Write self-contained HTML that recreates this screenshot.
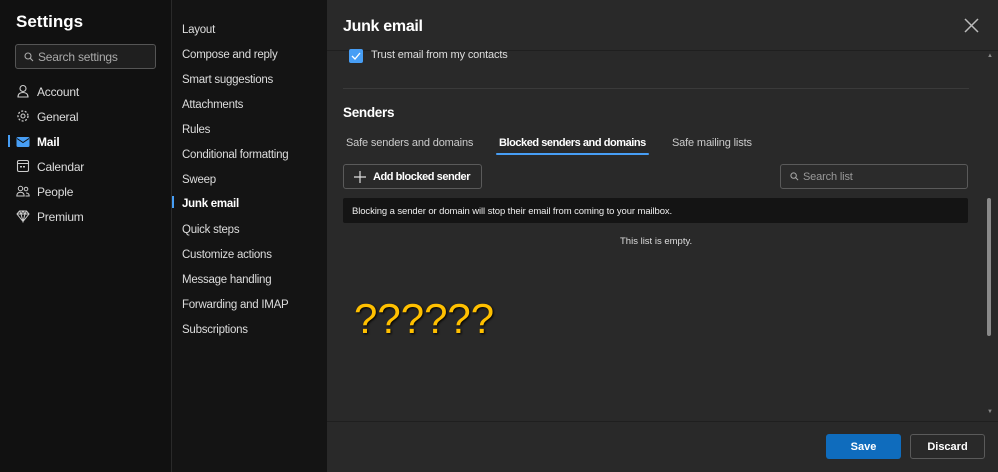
<!DOCTYPE html>
<html><head><meta charset="utf-8"><style>
*{box-sizing:border-box;margin:0;padding:0}
body{width:998px;height:472px;overflow:hidden;background:#111;font-family:"Segoe UI","Liberation Sans",sans-serif;color:#ddd;position:relative;font-size:12px}
.l{position:absolute;left:0;top:0;width:171px;height:472px;background:#111}
.m{position:absolute;left:171px;top:0;width:156px;height:472px;background:#141414;border-left:1px solid #2a2a2a}
.r{position:absolute;left:327px;top:0;width:671px;height:472px;background:#292929}
.t{position:absolute;white-space:nowrap}
h1{position:absolute;left:16px;top:12px;font-size:17px;font-weight:bold;color:#fff}
.srch{position:absolute;left:15px;top:44px;width:141px;height:25px;border:1px solid #555;border-radius:3px;background:#1f1f1f;color:#aaa;font-size:12px;padding:5px 0 0 22px;letter-spacing:-0.2px}
.nav{position:absolute;left:37px;font-size:12px;color:#ddd;letter-spacing:-0.2px}
.ic{position:absolute;left:16px;width:14px;height:14px}
.mi{position:absolute;left:10px;font-size:11.5px;color:#ddd;letter-spacing:-0.25px}
.nb{font-size:11px;letter-spacing:-0.15px}
.bb{font-size:11px;font-weight:bold;letter-spacing:-0.45px}
</style></head><body>
<div class="l">
<h1>Settings</h1>
<div class="srch"><svg style="position:absolute;left:8px;top:7px" width="10" height="10" viewBox="0 0 10 10"><circle cx="4" cy="4" r="3" fill="none" stroke="#aaa" stroke-width="1.1"/><line x1="6.2" y1="6.2" x2="9" y2="9" stroke="#aaa" stroke-width="1.1"/></svg>Search settings</div>
<svg class="ic" style="top:84px" viewBox="0 0 14 14"><circle cx="7" cy="4.5" r="3" fill="none" stroke="#ccc" stroke-width="1.1"/><path d="M2 13c0-3 2-4.5 5-4.5s5 1.5 5 4.5z" fill="none" stroke="#ccc" stroke-width="1.1"/></svg>
<div class="nav t" style="top:85px">Account</div>
<svg class="ic" style="top:109px" viewBox="0 0 14 14"><circle cx="7" cy="7" r="2" fill="none" stroke="#ccc" stroke-width="1.1"/><circle cx="7" cy="7" r="5" fill="none" stroke="#ccc" stroke-width="1.3" stroke-dasharray="2 1.6"/></svg>
<div class="nav t" style="top:110px">General</div>
<div style="position:absolute;left:8px;top:135px;width:2px;height:12px;background:#479ef5"></div>
<svg class="ic" style="top:135px" viewBox="0 0 14 14"><rect x="0.5" y="2" width="13" height="10" rx="1.5" fill="#479ef5"/><path d="M1 3.5l6 4 6-4" fill="none" stroke="#111" stroke-width="1"/></svg>
<div class="nav t" style="top:135px;font-weight:bold;color:#fff">Mail</div>
<svg class="ic" style="top:159px" viewBox="0 0 14 14"><rect x="1.5" y="1.5" width="11" height="11" rx="1.5" fill="none" stroke="#ccc" stroke-width="1.1"/><line x1="1.5" y1="4.5" x2="12.5" y2="4.5" stroke="#ccc"/><rect x="4" y="7" width="2" height="1.5" fill="#ccc"/><rect x="7" y="7" width="2" height="1.5" fill="#ccc"/></svg>
<div class="nav t" style="top:160px">Calendar</div>
<svg class="ic" style="top:184px" viewBox="0 0 14 14"><circle cx="4.5" cy="4.5" r="2.2" fill="none" stroke="#ccc"/><circle cx="10" cy="5" r="1.8" fill="none" stroke="#ccc"/><path d="M0.8 12c0-2.5 1.5-3.8 3.7-3.8s3.7 1.3 3.7 3.8zM9.5 12h3.7c0-2-1-3-3.2-3" fill="none" stroke="#ccc"/></svg>
<div class="nav t" style="top:185px">People</div>
<svg class="ic" style="top:209px" viewBox="0 0 14 14"><path d="M1 5l2.5-3h7L13 5 7 12.5z M1 5h12 M5 5l2 7.5 2-7.5 M3.5 2L5 5l2-3 2 3 1.5-3" fill="none" stroke="#ccc" stroke-width="1"/></svg>
<div class="nav t" style="top:210px">Premium</div>
</div>
<div class="m">
<div class="mi t" style="top:24px">Layout</div>
<div class="mi t" style="top:49px">Compose and reply</div>
<div class="mi t" style="top:74px">Smart suggestions</div>
<div class="mi t" style="top:99px">Attachments</div>
<div class="mi t" style="top:124px">Rules</div>
<div class="mi t" style="top:149px">Conditional formatting</div>
<div class="mi t" style="top:174px">Sweep</div>
<div style="position:absolute;left:0;top:196px;width:2px;height:12px;background:#479ef5"></div>
<div class="mi t" style="top:198px;font-weight:bold;color:#fff">Junk email</div>
<div class="mi t" style="top:224px">Quick steps</div>
<div class="mi t" style="top:249px">Customize actions</div>
<div class="mi t" style="top:274px">Message handling</div>
<div class="mi t" style="top:299px">Forwarding and IMAP</div>
<div class="mi t" style="top:324px">Subscriptions</div>
</div>
<div class="r">
<div class="t" style="left:16px;top:18px;font-size:16px;font-weight:bold;color:#fff;letter-spacing:-0.3px">Junk email</div>
<svg style="position:absolute;left:637px;top:18px" width="15" height="15" viewBox="0 0 15 15"><path d="M1 1l13 13M14 1L1 14" stroke="#bbb" stroke-width="1.5"/></svg>
<div style="position:absolute;left:0;top:50px;width:671px;height:1px;background:#1f1f1f"></div>
<div style="position:absolute;left:22px;top:49px;width:14px;height:14px;background:#479ef5;border-radius:2px"><svg width="14" height="14" viewBox="0 0 14 14"><path d="M3 7l3 3 5-6" fill="none" stroke="#fff" stroke-width="1.3"/></svg></div>
<div class="t nb" style="left:44px;top:49px">Trust email from my contacts</div>
<div style="position:absolute;left:16px;top:88px;width:626px;height:1px;background:#3a3a3a"></div>
<div class="t" style="left:16px;top:105px;font-size:13.5px;font-weight:bold;color:#fff;letter-spacing:-0.3px">Senders</div>
<div class="t nb" style="left:19px;top:137px;color:#ccc">Safe senders and domains</div>
<div class="t bb" style="left:172px;top:137px;color:#fff">Blocked senders and domains</div>
<div style="position:absolute;left:169px;top:153px;width:153px;height:2px;background:#479ef5;border-radius:1px"></div>
<div class="t nb" style="left:345px;top:137px;color:#ccc">Safe mailing lists</div>
<div style="position:absolute;left:16px;top:164px;width:139px;height:25px;border:1px solid #5a5a5a;border-radius:3px"></div>
<svg style="position:absolute;left:27px;top:171px" width="12" height="12" viewBox="0 0 12 12"><path d="M6 0v12M0 6h12" stroke="#ddd" stroke-width="1.2"/></svg>
<div class="t bb" style="left:46px;top:171px;color:#fff">Add blocked sender</div>
<div style="position:absolute;left:453px;top:164px;width:188px;height:25px;border:1px solid #5a5a5a;border-radius:3px;background:#2b2b2b"></div>
<svg style="position:absolute;left:463px;top:172px" width="9" height="9" viewBox="0 0 10 10"><circle cx="4" cy="4" r="3" fill="none" stroke="#aaa" stroke-width="1.1"/><line x1="6.2" y1="6.2" x2="9" y2="9" stroke="#aaa" stroke-width="1.1"/></svg>
<div class="t nb" style="left:476px;top:171px;color:#999">Search list</div>
<div style="position:absolute;left:16px;top:198px;width:625px;height:25px;background:#141414;border-radius:2px"></div>
<div class="t" style="left:25px;top:206px;font-size:9.5px;color:#eee;letter-spacing:-0.1px">Blocking a sender or domain will stop their email from coming to your mailbox.</div>
<div class="t" style="left:293px;top:236px;font-size:9.5px;color:#ddd">This list is empty.</div>
<div class="t" style="left:27px;top:295px;font-size:42px;color:#ffc000;text-shadow:1px 1px 2px #000">??????</div>
<div style="position:absolute;left:660px;top:198px;width:4px;height:138px;background:#8a8a8a;border-radius:2px"></div>
<div class="t" style="left:660px;top:53px;font-size:6px;color:#888">▲</div>
<div class="t" style="left:660px;top:409px;font-size:6px;color:#888">▼</div>
<div style="position:absolute;left:0;top:421px;width:671px;height:1px;background:#1f1f1f"></div>
<div style="position:absolute;left:499px;top:434px;width:75px;height:25px;background:#0f6cbd;border-radius:3px;color:#fff;font-weight:bold;font-size:11px;text-align:center;line-height:27px">Save</div>
<div style="position:absolute;left:583px;top:434px;width:75px;height:25px;border:1px solid #5a5a5a;border-radius:3px;color:#fff;font-weight:bold;font-size:11px;text-align:center;line-height:25px">Discard</div>
</div>
</body></html>
